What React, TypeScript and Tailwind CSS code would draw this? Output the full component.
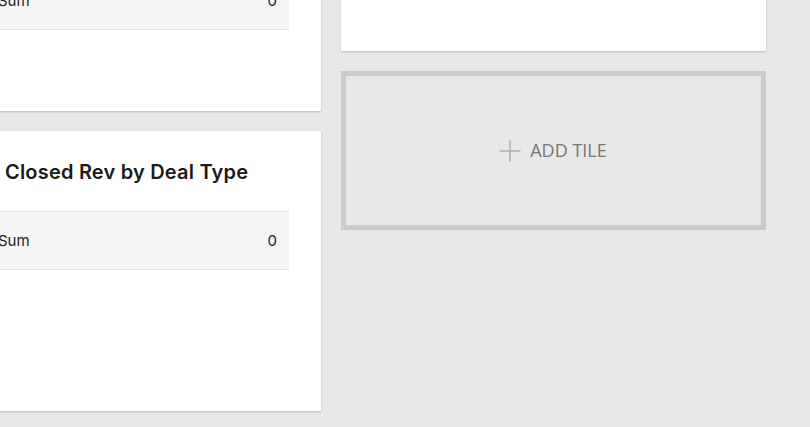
import { Plus } from "lucide-react";

function SumRow() {
  return (
    <div className="mr-[32px] flex h-[59px] items-center justify-between border-y border-[#e4e4e4] bg-[#f5f5f5] pl-[38px] pr-[12px] pt-[1px] text-[15px] text-[#222]">
      <span>Sum</span>
      <span>0</span>
    </div>
  );
}

export default function App() {
  return (
    <div
      className="h-[427px] w-[810px] overflow-hidden bg-[#e8e8e8]"
      style={{ fontFamily: "Inter, 'Noto Sans', sans-serif" }}
    >
      <div className="-mt-[109px] flex gap-[20px]">
        <div className="-ml-[40px] flex w-[361px] flex-col gap-[20px]">
          <div className="h-[220px] bg-white pt-[80px] shadow-[0_1px_2px_rgba(0,0,0,0.2)]">
            <SumRow />
          </div>
          <div className="h-[280px] bg-white shadow-[0_1px_2px_rgba(0,0,0,0.2)]">
            <div className="flex h-[80px] items-center pl-[45px] pt-[1px] text-[20px] font-semibold tracking-[0.2px] text-[#1a1a1a]">
              Closed Rev by Deal Type
            </div>
            <SumRow />
          </div>
        </div>
        <div className="flex w-[425px] flex-col gap-[20px]">
          <div className="h-[160px] bg-white shadow-[0_1px_2px_rgba(0,0,0,0.2)]" />
          <button className="flex h-[159px] items-center justify-center gap-[3px] border-[5px] border-[#cccccc] bg-[#e8e8e8] pr-[7px] text-[#777]">
            <Plus size={34} strokeWidth={1.1} className="text-[#b0b0b0]" />
            <span
              className="text-[18px]"
              style={{ fontFamily: "'Open Sans', sans-serif" }}
            >
              ADD TILE
            </span>
          </button>
        </div>
      </div>
    </div>
  );
}
